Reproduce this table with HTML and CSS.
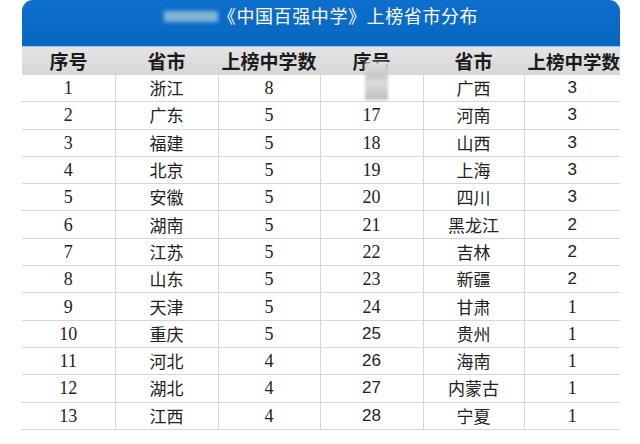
FILE: index.html
```html
<!DOCTYPE html>
<html lang="zh">
<head>
<meta charset="utf-8">
<link rel="stylesheet" href="styles.css">
</head>
<body>
<div class="wrap">
  <div class="banner">
    <span class="smudge"></span>
    <span class="title">《中国百强中学》上榜省市分布</span>
  </div>
  <table class="grid">
    <colgroup>
      <col class="c1"><col class="c2"><col class="c3"><col class="c4"><col class="c5"><col class="c6">
    </colgroup>
    <thead>
      <tr><th>序号</th><th>省市</th><th>上榜中学数</th><th>序号</th><th>省市</th><th class="last">上榜中学数</th></tr>
    </thead>
    <tbody>
      <tr><td class="n">1</td><td>浙江</td><td class="n">8</td><td class="n"></td><td>广西</td><td class="m">3</td></tr>
      <tr><td class="n">2</td><td>广东</td><td class="n">5</td><td class="n">17</td><td>河南</td><td class="m">3</td></tr>
      <tr><td class="n">3</td><td>福建</td><td class="n">5</td><td class="n">18</td><td>山西</td><td class="m">3</td></tr>
      <tr><td class="n">4</td><td>北京</td><td class="n">5</td><td class="n">19</td><td>上海</td><td class="m">3</td></tr>
      <tr><td class="n">5</td><td>安徽</td><td class="n">5</td><td class="n">20</td><td>四川</td><td class="m">3</td></tr>
      <tr><td class="n">6</td><td>湖南</td><td class="n">5</td><td class="n">21</td><td>黑龙江</td><td class="m">2</td></tr>
      <tr><td class="n">7</td><td>江苏</td><td class="n">5</td><td class="n">22</td><td>吉林</td><td class="m">2</td></tr>
      <tr><td class="n">8</td><td>山东</td><td class="n">5</td><td class="n">23</td><td>新疆</td><td class="m">2</td></tr>
      <tr><td class="n">9</td><td>天津</td><td class="n">5</td><td class="n">24</td><td>甘肃</td><td class="n">1</td></tr>
      <tr><td class="n">10</td><td>重庆</td><td class="n">5</td><td class="m">25</td><td>贵州</td><td class="n">1</td></tr>
      <tr><td class="n">11</td><td>河北</td><td class="n">4</td><td class="m">26</td><td>海南</td><td class="n">1</td></tr>
      <tr><td class="n">12</td><td>湖北</td><td class="n">4</td><td class="m">27</td><td>内蒙古</td><td class="n">1</td></tr>
      <tr><td class="n">13</td><td>江西</td><td class="n">4</td><td class="m">28</td><td>宁夏</td><td class="n">1</td></tr>
    </tbody>
  </table>
  <div class="mosaic"></div>
</div>
</body>
</html>
```

FILE: styles.css
```css
html, body {
  margin: 0;
  padding: 0;
  background: #ffffff;
}
body {
  width: 640px;
  height: 444px;
  overflow: hidden;
  font-family: "Noto Sans CJK SC", "Noto Sans", sans-serif;
  color: #1e1e1e;
}
.wrap {
  position: relative;
  margin-left: 22px;
  width: 598px;
}
.banner {
  height: 47px;
  box-sizing: border-box;
  background: linear-gradient(#0d6fcc, #0766bf);
  border-radius: 11px 11px 0 0;
  border-bottom: 1px solid #9cc4e6;
  display: flex;
  align-items: flex-start;
  justify-content: center;
  padding-top: 4px;
}
.smudge {
  width: 54px;
  height: 11px;
  margin-top: 7px;
  background: #86b6d6;
  filter: blur(2px);
}
.title {
  color: #ffffff;
  font-size: 18px;
  line-height: 22px;
  letter-spacing: 0.6px;
}
.grid {
  border-collapse: collapse;
  table-layout: fixed;
  width: 598px;
}
.c1 { width: 93px; }
.c2 { width: 103px; }
.c3 { width: 102px; }
.c4 { width: 103px; }
.c5 { width: 101px; }
.c6 { width: 96px; }
.grid th {
  height: 28px;
  padding: 0;
  background: linear-gradient(#e4e4e4, #d7d7d7);
  font-size: 19px;
  font-weight: 700;
  color: #1a1a1a;
  text-align: center;
  white-space: nowrap;
  line-height: 28px;
}
.grid th.last {
  font-size: 18.5px;
  text-align: right;
}
.grid td {
  height: 26.3px;
  padding: 0;
  border-right: 1px solid #d6d6d6;
  border-bottom: 1px solid #d6d6d6;
  text-align: center;
  font-size: 17px;
  line-height: 26px;
  color: #222222;
}
.grid td:last-child {
  border-right: none;
}
.grid td.n {
  font-family: "Liberation Serif", serif;
  font-size: 18px;
}
.grid td.m {
  font-family: "Liberation Sans", sans-serif;
  font-size: 17px;
}
.mosaic {
  position: absolute;
  left: 343px;
  top: 62px;
  width: 23px;
  height: 38px;
  background: linear-gradient(#e2e2e2 0%, #c8c8c8 35%, #dcdcdc 55%, #bdbdbd 100%);
  filter: blur(1.5px);
}
```
